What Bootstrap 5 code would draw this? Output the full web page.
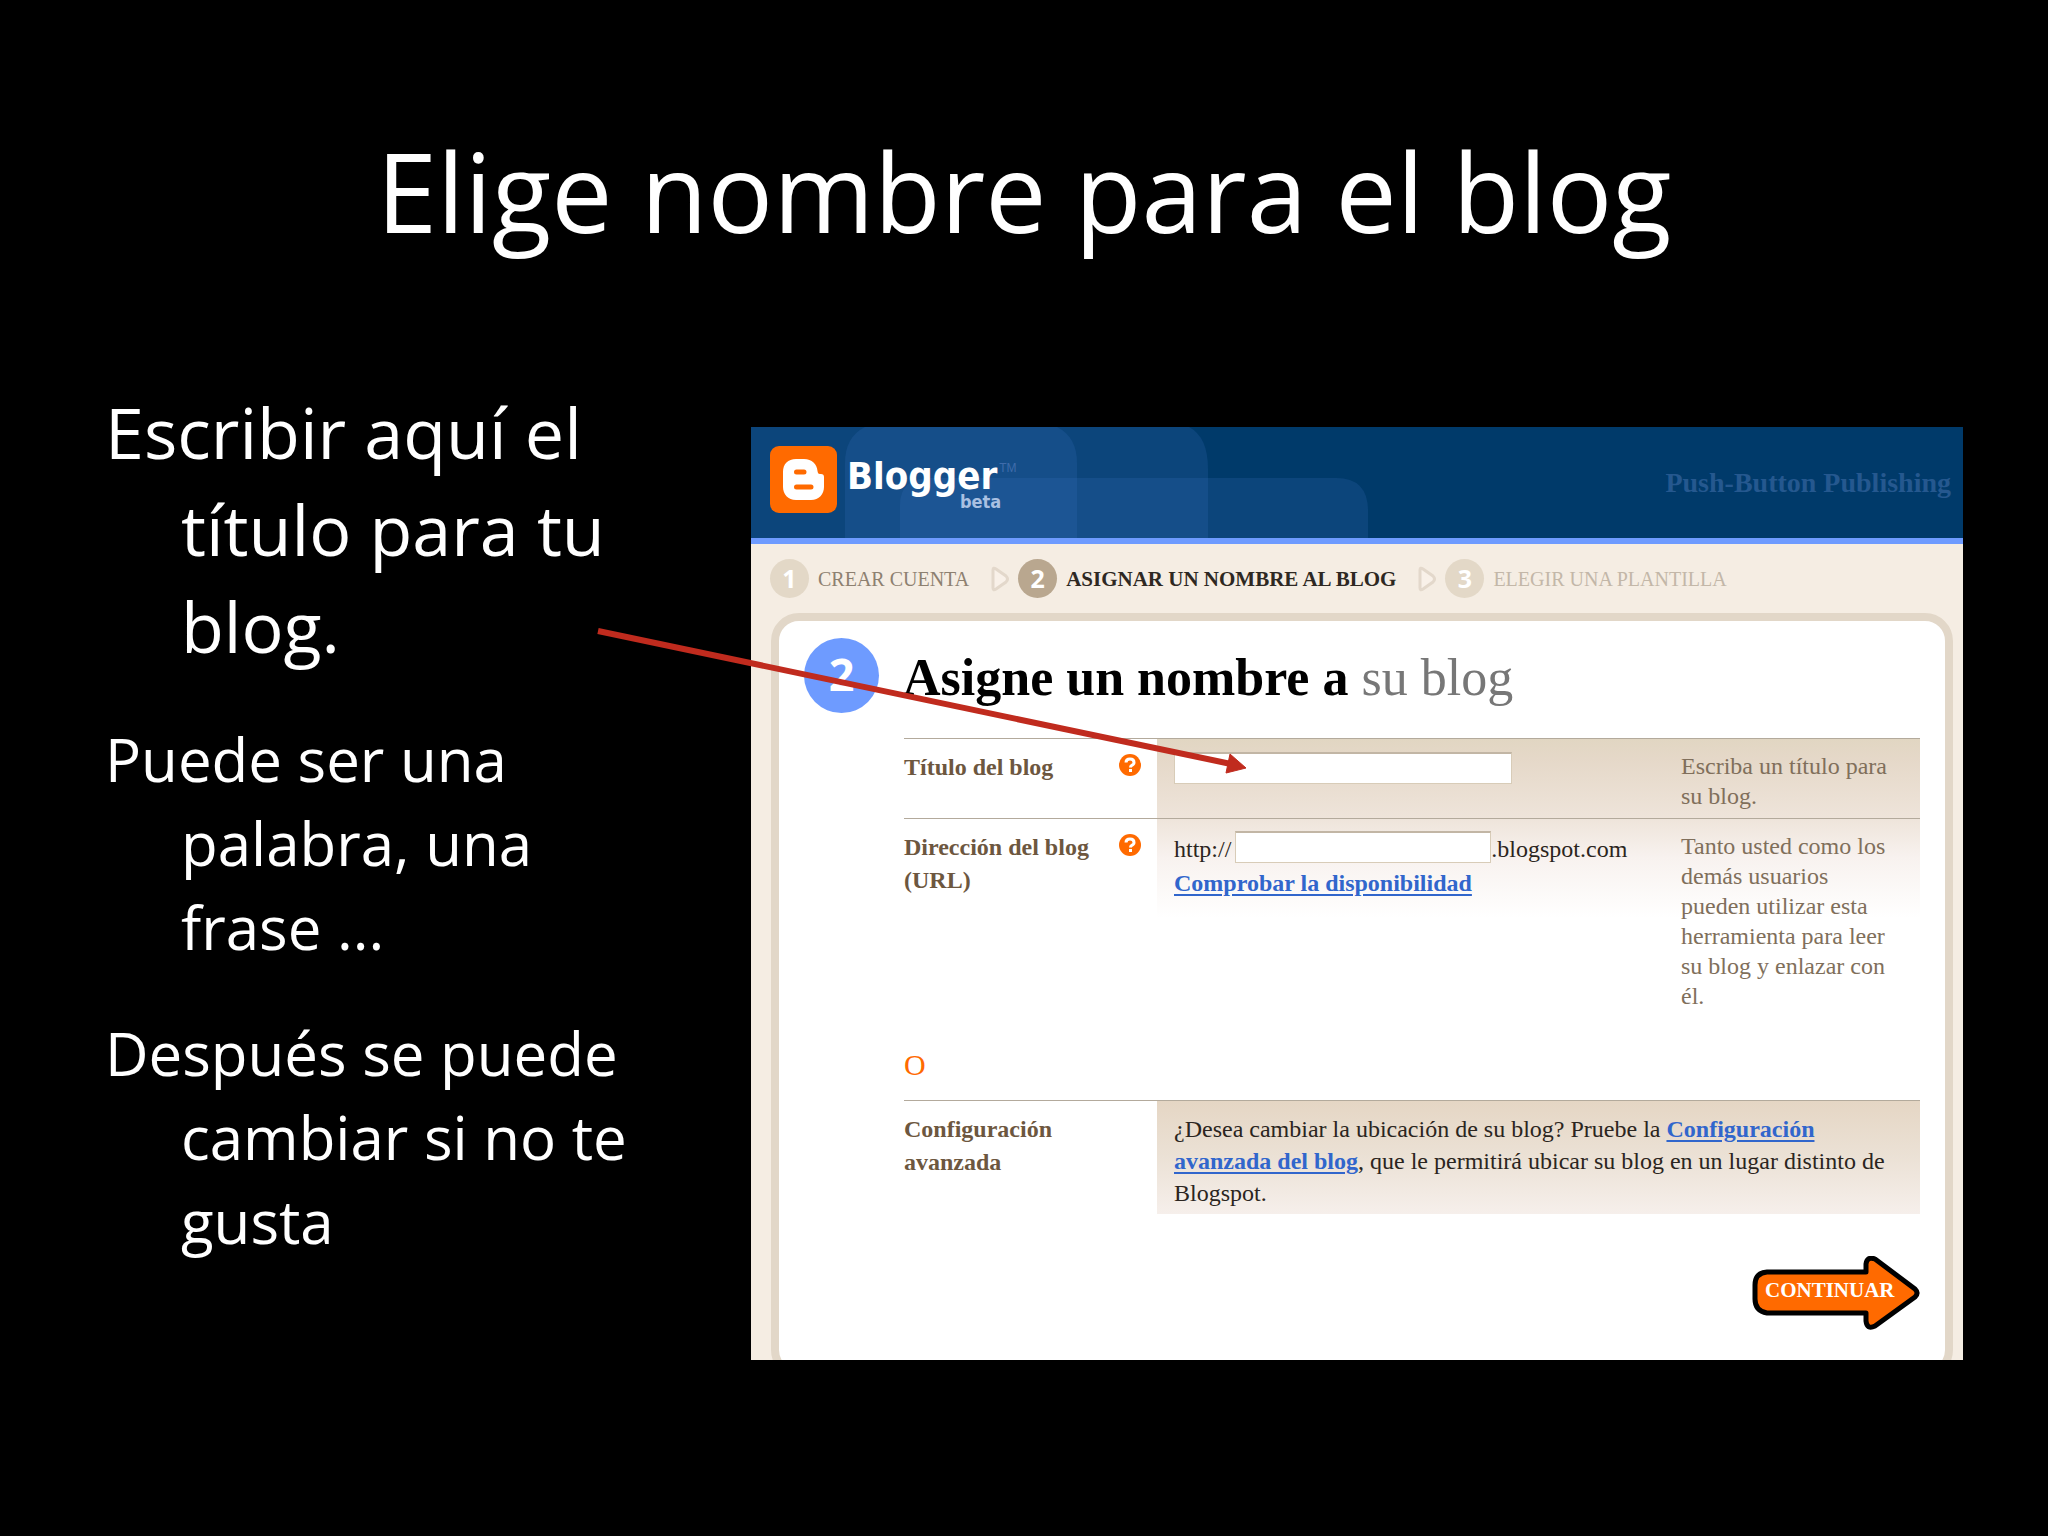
<!DOCTYPE html>
<html lang="es">
<head>
<meta charset="utf-8">
<meta name="viewport" content="width=device-width, initial-scale=1">
<title>Elige nombre para el blog</title>
<link href="https://cdn.jsdelivr.net/npm/bootstrap@5.3.0/dist/css/bootstrap.min.css" rel="stylesheet">
<style>
  body { background: #000; color: #fff; font-family: "Open Sans", sans-serif; }
  .slide { min-height: 100vh; padding: 126px 85px 0; }
  .slide-title { font-size: 109px; line-height: 130px; margin: 0 0 128px; }
  .notes { flex: 0 0 550px; gap: 42px; }
  .notes p { margin: 0; padding-left: 76px; text-indent: -76px; font-size: 60px; line-height: 84px; }
  .notes .notes-main { font-size: 70px; line-height: 97px; }
  .slide-body { gap: 96px; padding-left: 20px; }
  .shot-wrap { margin-top: 43px; min-width: 0; }

  .shot { background: #f5ede3; color: #2b2520; font-family: "Liberation Serif", serif; font-size: 24px; line-height: 30px; overflow: hidden; }
  .shot-head { background: #003a6a; border-bottom: 6px solid #6e9bff; height: 117px; padding: 0 12px 0 19px; overflow: hidden; }
  .head-shapes { position: absolute; left: 0; top: 0; }
  .brand { margin-bottom: 6px; }
  .logo-word { font-family: "DejaVu Sans Condensed", "DejaVu Sans", sans-serif; font-weight: 700; font-size: 38px; line-height: 50px; color: #fff; margin: 0 0 8px 10px; }
  .logo-beta { position: absolute; right: -4px; top: 38px; font-size: 18px; line-height: 26px; color: #a9c0e2; }
  .logo-tm { position: absolute; left: 100%; top: 11px; margin-left: 2px; font-family: "Liberation Sans", sans-serif; font-weight: 400; font-size: 12px; line-height: 12px; color: #3f6cab; }
  .tagline { color: #25588f; font-weight: 700; font-size: 28px; }

  .steps { padding: 15px 19px; font-size: 20px; color: #8d8070; white-space: nowrap; }
  .steps .num { width: 39px; height: 39px; border-radius: 50%; background: #e3d8c7; color: #fff; font: 700 25px/38px "Open Sans", sans-serif; text-align: center; margin-right: 9px; }
  .steps .sep { margin: 0 7px 0 22px; }
  .steps .now { font-size: 21px; font-weight: 700; color: #2e2822; }
  .steps .now .num { background: #b9a78f; }
  .steps .next { color: #c3b7a8; }

  .panel { background: #fff; border: 8px solid #e2d7c8; border-radius: 28px; margin: 0 10px -18px 20px; padding: 17px 25px 40px; }
  .panel-num { width: 75px; height: 75px; border-radius: 50%; background: #6e9bff; color: #fff; font: 700 45px/72px "Open Sans", sans-serif; text-align: center; }
  .panel h2 { font-size: 52px; line-height: 60px; margin: 0; color: #000; font-weight: 700; }
  .panel h2 span { font-weight: 400; color: #777; }
  .form-area { margin-left: 100px; }

  .fields { margin-top: 25px; background: linear-gradient(#e1d6c2, #e5d8c8 20px, #eee4da 80px, #f8f2ef 120px, #fff) no-repeat right top / calc(100% - 253px) 180px; }
  .field-row { border-top: 1px solid #b3aa9c; }
  .field-row .name-col { flex: 0 0 253px; padding: 12px 16px 0 0; font-weight: 700; color: #6d573f; line-height: 33px; }
  .field-row .ctl-col { padding-left: 17px; }
  .field-row .tip-col { flex: 0 0 239px; padding: 12px 20px 7px 0; color: #806f5b; line-height: 30px; }
  .title-row .ctl-col { padding-top: 13px; }
  .url-row .ctl-col { padding-top: 11px; }
  .url-row { min-height: 210px; }
  .qmark { margin-top: 3px; }
  .box { background: #fff; border: 1px solid #d8ccb8; border-top: 2px solid #c2b6a5; padding: 0 6px; border-radius: 0; height: 32px; color: #2b2520; }
  .box-title { width: 338px; }
  .box-url { width: 256px; }
  .shot a { color: #3166cc; font-weight: 700; text-decoration-thickness: 2px; text-underline-offset: 3px; }
  .or { color: #ff6a00; font-size: 30px; line-height: 34px; margin: 20px 0 18px; }
  .adv-text { background: linear-gradient(#e5d6c4, #ebe1d5 55px, #f6efeb); padding: 12px 14px 5px 17px; line-height: 32px; }

  .go { width: 168px; height: 74px; margin-top: 42px; padding: 0 22px 6px 13px; border: 0; background: none; color: #fff; font-weight: 700; font-size: 21px; text-align: left; position: relative; }
  .go svg { position: absolute; left: 0; top: 0; }
  .go span { position: relative; }
  .pointer { position: absolute; left: -160px; top: 190px; pointer-events: none; }
</style>
</head>
<body>
<main class="slide">
  <h1 class="slide-title text-center fw-normal">Elige nombre para el blog</h1>
  <div class="slide-body d-flex align-items-start">
    <section class="notes d-flex flex-column">
      <p class="notes-main">Escribir aquí el título para tu blog.</p>
      <p>Puede ser una palabra, una frase ...</p>
      <p>Después se puede cambiar si no te gusta</p>
    </section>

    <div class="shot-wrap flex-grow-1 position-relative">
      <div class="shot">
        <header class="shot-head position-relative d-flex align-items-center justify-content-between">
          <svg class="head-shapes" width="640" height="111" aria-hidden="true">
            <path d="M0 0H438Q457 10 457 42V111H0Z" fill="#3d74c4" fill-opacity=".2"/>
            <path d="M94 111V36Q94 10 114 0H306Q326 10 326 36V111Z" fill="#3d74c4" fill-opacity=".2"/>
            <path d="M149 111V78Q149 51 180 51H585Q617 51 617 84V111Z" fill="#3d74c4" fill-opacity=".2"/>
          </svg>
          <div class="brand d-flex align-items-center position-relative">
            <svg width="67" height="67" viewBox="0 0 67 67" role="img" aria-label="Blogger">
              <rect width="67" height="67" rx="9" fill="#ff6a00"/>
              <path d="M26 13H34C42 13 47 18 47.500 25C48 28 49 28 51 28C53 28 54 29 54 31V41C54 48 49 54 41 54H26C18 54 13 48 13 41V26C13 18 18 13 26 13Z" fill="#fff"/>
              <path d="M26.500 26H34M26.500 41H41" stroke="#ff6a00" stroke-width="5" stroke-linecap="round"/>
            </svg>
            <div class="logo-word position-relative">Blogger<span class="logo-beta">beta</span><span class="logo-tm">TM</span></div>
          </div>
          <div class="tagline position-relative">Push-Button Publishing</div>
        </header>

        <ol class="steps list-unstyled d-flex align-items-center m-0">
          <li class="d-flex align-items-center"><span class="num">1</span>CREAR CUENTA
            <svg class="sep" width="20" height="26" aria-hidden="true"><path d="M2 4Q2 1 5 3L15 10Q18 13 15 16L5 23Q2 25 2 22Z" fill="#f9f1e9" stroke="#e3d8cb" stroke-width="3"/></svg></li>
          <li class="now d-flex align-items-center"><span class="num">2</span>ASIGNAR UN NOMBRE AL BLOG
            <svg class="sep" width="20" height="26" aria-hidden="true"><path d="M2 4Q2 1 5 3L15 10Q18 13 15 16L5 23Q2 25 2 22Z" fill="#f9f1e9" stroke="#e3d8cb" stroke-width="3"/></svg></li>
          <li class="next d-flex align-items-center"><span class="num">3</span>ELEGIR UNA PLANTILLA</li>
        </ol>

        <form class="panel" onsubmit="return false">
          <div class="d-flex align-items-center">
            <div class="panel-num">2</div>
            <h2 class="ms-4 pt-1">Asigne un nombre a <span>su blog</span></h2>
          </div>
          <div class="form-area">
            <div class="fields">
              <div class="field-row title-row d-flex">
                <div class="name-col d-flex justify-content-between align-items-start">
                  <label for="blog-title">Título del blog</label>
                  <svg class="qmark" width="22" height="22" viewBox="0 0 22 22" role="img" aria-label="Ayuda"><circle cx="11" cy="11" r="11" fill="#ff6a00"/><path d="M7 8.500Q7 5 11 5T15 8.500Q15 10.500 12.500 11.500Q11.500 12 11.500 13.500" fill="none" stroke="#fff" stroke-width="3"/><rect x="10" y="15" width="3" height="3" fill="#fff"/></svg>
                </div>
                <div class="ctl-col flex-grow-1"><input class="box box-title d-block" id="blog-title" type="text"></div>
                <div class="tip-col">Escriba un título para su blog.</div>
              </div>
              <div class="field-row url-row d-flex">
                <div class="name-col d-flex justify-content-between align-items-start">
                  <label for="blog-url">Dirección del blog (URL)</label>
                  <svg class="qmark flex-shrink-0" width="22" height="22" viewBox="0 0 22 22" role="img" aria-label="Ayuda"><circle cx="11" cy="11" r="11" fill="#ff6a00"/><path d="M7 8.500Q7 5 11 5T15 8.500Q15 10.500 12.500 11.500Q11.500 12 11.500 13.500" fill="none" stroke="#fff" stroke-width="3"/><rect x="10" y="15" width="3" height="3" fill="#fff"/></svg>
                </div>
                <div class="ctl-col flex-grow-1">
                  <div class="d-flex align-items-center mb-1"><span class="pt-1 pe-1">http://</span><input class="box box-url" id="blog-url" type="text"><span class="pt-1">.blogspot.com</span></div>
                  <a href="#">Comprobar la disponibilidad</a>
                </div>
                <div class="tip-col">Tanto usted como los demás usuarios pueden utilizar esta herramienta para leer su blog y enlazar con él.</div>
              </div>
            </div>

            <div class="or">O</div>

            <div class="field-row d-flex">
              <div class="name-col">Configuración<br>avanzada</div>
              <div class="adv-text flex-grow-1">¿Desea cambiar la ubicación de su blog? Pruebe la <a href="#">Configuración avanzada del blog</a>, que le permitirá ubicar su blog en un lugar distinto de Blogspot.</div>
            </div>

            <div class="d-flex justify-content-end">
              <button class="go" type="submit">
                <svg width="168" height="74" viewBox="0 0 168 74" aria-hidden="true"><path d="M15 16H114V8Q115 0 123 3L163 33Q167 37 163 41L123 70Q115 74 114 65V57H15Q3 55 3 43V29Q3 17 15 16Z" fill="#ff6a00" stroke="#000" stroke-width="5" stroke-linejoin="round"/></svg>
                <span>CONTINUAR</span>
              </button>
            </div>
          </div>
        </form>
      </div>

      <svg class="pointer" width="670" height="170" aria-hidden="true">
        <path d="M7 14L640 147" stroke="#c02b1e" stroke-width="6"/>
        <path d="M639 137L655 151L635 156Z" fill="#c02b1e" stroke="#c02b1e"/>
      </svg>
    </div>
  </div>
</main>
<script src="https://cdn.jsdelivr.net/npm/bootstrap@5.3.0/dist/js/bootstrap.bundle.min.js"></script>
</body>
</html>
